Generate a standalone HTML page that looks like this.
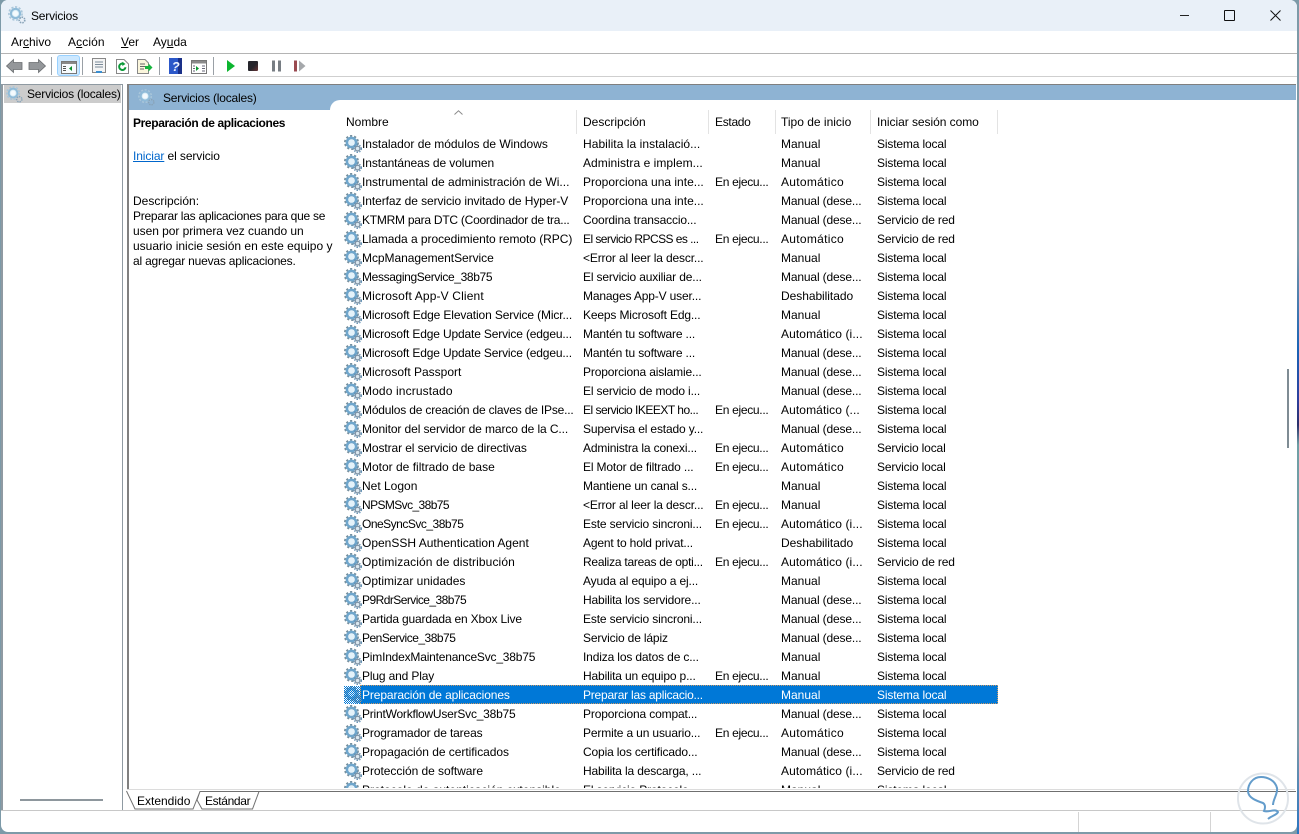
<!DOCTYPE html>
<html><head><meta charset="utf-8"><style>
html,body{margin:0;padding:0;width:1299px;height:834px;overflow:hidden;background:#7d9aa8}
body{position:relative;font:12px/15px "Liberation Sans",sans-serif;color:#000}
.a{position:absolute;white-space:nowrap}
#win{position:absolute;left:1px;top:0;width:1296px;height:832px;background:#fff;border-radius:7px;overflow:hidden}
svg{position:absolute;overflow:visible}
.r{position:absolute;left:0;width:1000px;height:19px}
.r span{position:absolute;top:2px;white-space:nowrap}
.r svg{left:344px;top:0}
.n{left:362px}.d{left:583px;letter-spacing:-.15px}.s{left:715px;letter-spacing:-.3px}.t{left:781px}.l{left:877px;letter-spacing:-.15px}
.au{letter-spacing:.3px}.ai{letter-spacing:.1px}.de{letter-spacing:-.15px}
.sel2{position:absolute;left:360px;top:-1px;width:638px;height:19px;background:#0078d7;outline:1px dotted #c96;outline-offset:-1px}
.h{position:absolute;top:115px;white-space:nowrap}
.v{position:absolute;top:110px;height:24px;width:1px;background:#e3e3e3}
.sep{position:absolute;top:57px;width:1px;height:18px;background:#9aa0a6}
u{text-decoration:underline}
</style></head><body>
<svg width="0" height="0" style="position:absolute"><defs>
<symbol id="g" viewBox="0 0 18 18">
<circle cx="7.5" cy="7.5" r="6.6" fill="none" stroke="#76909f" stroke-width="1.8" stroke-dasharray="2.2 2"/>
<circle cx="7.5" cy="7.5" r="4.6" fill="none" stroke="#6fa6cc" stroke-width="2.6"/>
<circle cx="7.5" cy="7.5" r="3" fill="#e4f2fa"/>
<circle cx="13.6" cy="13.6" r="2.4" fill="#dbe8f0" stroke="#7f93a5" stroke-width="1.4"/>
<circle cx="13.6" cy="13.6" r="3.8" fill="none" stroke="#5f8fb3" stroke-width="1.2" stroke-dasharray="1.4 1.4"/>
</symbol>
<symbol id="lg" viewBox="0 0 18 18">
<circle cx="7.5" cy="7.5" r="6.6" fill="none" stroke="#a9c6da" stroke-width="1.6" stroke-dasharray="2.2 1.6"/>
<circle cx="7.5" cy="7.5" r="4.6" fill="#d8ecf6" stroke="#8fbbd8" stroke-width="2"/>
<circle cx="7.5" cy="7.5" r="2.6" fill="#f4fafd"/>
<circle cx="14" cy="14" r="2.8" fill="none" stroke="#88a3b8" stroke-width="1.6" stroke-dasharray="1.5 1"/>
</symbol>
<pattern id="dith" width="2" height="2" patternUnits="userSpaceOnUse"><rect width="1" height="1" fill="#0078d7"/><rect x="1" y="1" width="1" height="1" fill="#0078d7"/></pattern>
</defs></svg>
<div id="win">
<div class="a" style="left:0;top:0;width:1296px;height:31px;background:#e9f0f8"></div>
</div>
<div class="a" style="left:1297px;top:0;width:2px;height:834px;background:linear-gradient(#7d9aa8 0,#7d9aa8 250px,#1a63b5 350px,#2d3f9c 400px,#2a2f6a 425px,#6f9fa5 445px,#7d9aa8 740px,#2a75c0 834px)"></div>
<svg style="left:8px;top:6px" width="18" height="18"><use href="#lg" width="18" height="18"/></svg>
<div class="a" style="left:31px;top:9px;letter-spacing:-.2px">Servicios</div>
<!-- window controls -->
<div class="a" style="left:1180px;top:15px;width:9px;height:1px;background:#222"></div>
<div class="a" style="left:1224px;top:10px;width:9px;height:9px;border:1px solid #111;border-radius:1px"></div>
<svg style="left:1270px;top:10px" width="11" height="11"><path d="M.5.5L10.5 10.5M10.5.5L.5 10.5" stroke="#111" stroke-width="1" fill="none"/></svg>
<!-- menu -->
<div class="a" style="left:11px;top:35px">Ar<u>c</u>hivo</div>
<div class="a" style="left:68px;top:35px;letter-spacing:.1px">A<u>c</u>ción</div>
<div class="a" style="left:121px;top:35px"><u>V</u>er</div>
<div class="a" style="left:153px;top:35px">Ay<u>u</u>da</div>
<div class="a" style="left:1px;top:53px;width:1296px;height:1px;background:#b4b4b4"></div>
<!-- toolbar -->
<svg style="left:6px;top:59px" width="40" height="14"><path d="M.5 7L7.5.5V3.5H16V10.5H7.5V13.5Z" fill="#94979a" stroke="#6a6d70" stroke-width=".8"/><path d="M39.5 7L32.5.5V3.5H23V10.5H32.5V13.5Z" fill="#94979a" stroke="#6a6d70" stroke-width=".8"/></svg>
<div class="sep" style="left:51px"></div>
<div class="a" style="left:57px;top:55px;width:23px;height:21px;background:#cce8ff;border:1px solid #99d1ff;box-sizing:border-box;border-radius:3px"></div>
<svg style="left:61px;top:61px" width="16" height="13"><rect x=".5" y=".5" width="15" height="12" fill="#f7fbfe" stroke="#777"/><rect x="1" y="1" width="14" height="2" fill="#888"/><path d="M2 5.5H5M2 7.5H5M2 9.5H5" stroke="#555"/><path d="M11 5V10L8 7.5Z" fill="#0a8f2e"/></svg>
<div class="sep" style="left:82px"></div>
<svg style="left:92px;top:58px" width="14" height="15"><rect x=".5" y=".5" width="13" height="14" fill="#f4f4f4" stroke="#888"/><path d="M3 4H11M3 6.5H11M3 9H11" stroke="#7a8a99"/><rect x="4" y="13" width="6" height="2" fill="#3a8ed0"/></svg>
<svg style="left:116px;top:59px" width="13" height="15"><path d="M.5.5H8L12.5 5V14.5H.5Z" fill="#fff" stroke="#888"/><path d="M9.5 8.2A3.2 3.2 0 1 1 7.5 4.8" fill="none" stroke="#0b9a38" stroke-width="2"/><path d="M6.3 2.8L9.5 5L6.3 7Z" fill="#0b9a38"/></svg>
<svg style="left:137px;top:59px" width="16" height="15"><path d="M.5.5H8L11.5 4V14.5H.5Z" fill="#fbf6dc" stroke="#888"/><path d="M3 5H8M3 7.5H8M3 10H7" stroke="#666"/><path d="M8 7H11.5V4.5L15.5 8.5L11.5 12.5V10H8Z" fill="#16b53d"/></svg>
<div class="sep" style="left:159px"></div>
<svg style="left:169px;top:58px" width="13" height="16"><rect width="13" height="16" fill="#2c58c9"/><rect x="9" width="4" height="16" fill="#1a3088"/><text x="2.8" y="13" font-family="Liberation Sans" font-weight="bold" font-style="italic" font-size="13" fill="#eef3ff">?</text></svg>
<svg style="left:191px;top:60px" width="16" height="14"><rect x=".5" y=".5" width="15" height="13" fill="#fff" stroke="#777"/><rect x="1" y="1" width="14" height="2.5" fill="#8a8a8a"/><path d="M5 6V11L8 8.5Z" fill="#0a9a30"/><path d="M2 6H4M2 8.5H4M2 11H4M11 6H14M11 8.5H14M11 11H14" stroke="#667"/></svg>
<div class="sep" style="left:213px"></div>
<svg style="left:227px;top:60px" width="9" height="12"><path d="M0 0L8 6L0 12Z" fill="#0cb52f"/></svg>
<div class="a" style="left:248px;top:61px;width:10px;height:10px;background:linear-gradient(135deg,#26262c 55%,#6b3436);border-radius:1px"></div>
<svg style="left:272px;top:60px" width="9" height="12"><rect width="3" height="11" y=".5" fill="#777d83"/><rect x="6" y=".5" width="3" height="11" fill="#777d83"/></svg>
<svg style="left:294px;top:60px" width="12" height="12"><rect y=".5" width="3" height="11" fill="#9a4a50"/><path d="M5 .5L11.5 6L5 11.5Z" fill="#a5a8ab"/></svg>
<div class="a" style="left:1px;top:76px;width:1296px;height:1px;background:#cfcfcf"></div>
<!-- left tree -->
<div class="a" style="left:1px;top:84px;width:122px;height:726px;box-sizing:border-box;border:1px solid #8f9aa2;border-left:2px solid #8f9aa2;border-bottom:none"></div>
<div class="a" style="left:4px;top:85px;width:117px;height:18px;background:#cccccc"></div>
<svg style="left:6px;top:86px" width="17" height="17"><use href="#lg" width="17" height="17"/></svg>
<div class="a" style="left:27px;top:87px;letter-spacing:-.2px">Servicios (locales)</div>
<div class="a" style="left:20px;top:799px;width:83px;height:2px;background:#8e979d"></div>
<!-- right panel -->
<div class="a" style="left:127px;top:84px;width:2px;height:706px;background:#808080"></div>
<div class="a" style="left:127px;top:84px;width:1169px;height:1px;background:#7f7f7f"></div>
<div class="a" style="left:129px;top:85px;width:1167px;height:15px;background:#8eb3d3"></div>
<div class="a" style="left:129px;top:100px;width:211px;height:10px;background:#8eb3d3"></div>
<div class="a" style="left:330px;top:100px;width:12px;height:12px;background:#fff;border-radius:10px 0 0 0"></div>
<svg style="left:138px;top:89px" width="17" height="17"><use href="#lg" width="17" height="17"/></svg>
<div class="a" style="left:163px;top:91px;letter-spacing:-.2px">Servicios (locales)</div>
<div class="a" style="left:133px;top:116px;font-weight:bold;letter-spacing:-.37px">Preparación de aplicaciones</div>
<div class="a" style="left:133px;top:149px;letter-spacing:-.1px"><u style="color:#0066cc">Iniciar</u> el servicio</div>
<div class="a" style="left:133px;top:194px">Descripción:</div>
<div class="a" style="left:133px;top:209px"><span style="letter-spacing:-.25px">Preparar las aplicaciones para que se</span><br><span style="letter-spacing:-.05px">usen por primera vez cuando un</span><br>usuario inicie sesión en este equipo y<br><span style="letter-spacing:-.2px">al agregar nuevas aplicaciones.</span></div>
<!-- header -->
<svg style="left:454px;top:110px" width="9" height="6"><path d="M.5 4.5L4.5 .8L8.5 4.5" fill="none" stroke="#8a8a8a"/></svg>
<div class="h" style="left:346px">Nombre</div>
<div class="h" style="left:583px">Descripción</div>
<div class="h" style="left:715px;letter-spacing:-.3px">Estado</div>
<div class="h" style="left:781px">Tipo de inicio</div>
<div class="h" style="left:877px;letter-spacing:-.05px">Iniciar sesión como</div>
<div class="v" style="left:576px"></div><div class="v" style="left:708px"></div><div class="v" style="left:775px"></div><div class="v" style="left:870px"></div><div class="v" style="left:997px"></div>
<!-- list -->
<div class="a" id="list" style="left:0;top:135px;width:1000px;height:653px;overflow:hidden">
<div class="r" style="top:0"><svg width="18" height="18"><use href="#g" width="18" height="18"/></svg><span class="n" style="letter-spacing:-.03px">Instalador de módulos de Windows</span><span class="d" style="letter-spacing:.05px">Habilita la instalació...</span><span class="t">Manual</span><span class="l">Sistema local</span></div>
<div class="r" style="top:19px"><svg width="18" height="18"><use href="#g" width="18" height="18"/></svg><span class="n" style="letter-spacing:-.09px">Instantáneas de volumen</span><span class="d" style="letter-spacing:.05px">Administra e implem...</span><span class="t">Manual</span><span class="l">Sistema local</span></div>
<div class="r" style="top:38px"><svg width="18" height="18"><use href="#g" width="18" height="18"/></svg><span class="n">Instrumental de administración de Wi...</span><span class="d" style="letter-spacing:0">Proporciona una inte...</span><span class="s">En ejecu...</span><span class="t au">Automático</span><span class="l">Sistema local</span></div>
<div class="r" style="top:57px"><svg width="18" height="18"><use href="#g" width="18" height="18"/></svg><span class="n" style="letter-spacing:-.08px">Interfaz de servicio invitado de Hyper-V</span><span class="d" style="letter-spacing:0">Proporciona una inte...</span><span class="t de">Manual (dese...</span><span class="l">Sistema local</span></div>
<div class="r" style="top:76px"><svg width="18" height="18"><use href="#g" width="18" height="18"/></svg><span class="n" style="letter-spacing:-.25px">KTMRM para DTC (Coordinador de tra...</span><span class="d">Coordina transaccio...</span><span class="t de">Manual (dese...</span><span class="l">Servicio de red</span></div>
<div class="r" style="top:95px"><svg width="18" height="18"><use href="#g" width="18" height="18"/></svg><span class="n" style="letter-spacing:-.05px">Llamada a procedimiento remoto (RPC)</span><span class="d" style="letter-spacing:-.55px">El servicio RPCSS es ...</span><span class="s">En ejecu...</span><span class="t au">Automático</span><span class="l">Servicio de red</span></div>
<div class="r" style="top:114px"><svg width="18" height="18"><use href="#g" width="18" height="18"/></svg><span class="n" style="letter-spacing:-.05px">McpManagementService</span><span class="d">&lt;Error al leer la descr...</span><span class="t">Manual</span><span class="l">Sistema local</span></div>
<div class="r" style="top:133px"><svg width="18" height="18"><use href="#g" width="18" height="18"/></svg><span class="n" style="letter-spacing:-.36px">MessagingService_38b75</span><span class="d">El servicio auxiliar de...</span><span class="t de">Manual (dese...</span><span class="l">Sistema local</span></div>
<div class="r" style="top:152px"><svg width="18" height="18"><use href="#g" width="18" height="18"/></svg><span class="n" style="letter-spacing:.14px">Microsoft App-V Client</span><span class="d">Manages App-V user...</span><span class="t" style="letter-spacing:-.05px">Deshabilitado</span><span class="l">Sistema local</span></div>
<div class="r" style="top:171px"><svg width="18" height="18"><use href="#g" width="18" height="18"/></svg><span class="n" style="letter-spacing:-.13px">Microsoft Edge Elevation Service (Micr...</span><span class="d">Keeps Microsoft Edg...</span><span class="t">Manual</span><span class="l">Sistema local</span></div>
<div class="r" style="top:190px"><svg width="18" height="18"><use href="#g" width="18" height="18"/></svg><span class="n" style="letter-spacing:-.16px">Microsoft Edge Update Service (edgeu...</span><span class="d">Mantén tu software ...</span><span class="t ai">Automático (i...</span><span class="l">Sistema local</span></div>
<div class="r" style="top:209px"><svg width="18" height="18"><use href="#g" width="18" height="18"/></svg><span class="n" style="letter-spacing:-.16px">Microsoft Edge Update Service (edgeu...</span><span class="d">Mantén tu software ...</span><span class="t de">Manual (dese...</span><span class="l">Sistema local</span></div>
<div class="r" style="top:228px"><svg width="18" height="18"><use href="#g" width="18" height="18"/></svg><span class="n">Microsoft Passport</span><span class="d">Proporciona aislamie...</span><span class="t de">Manual (dese...</span><span class="l">Sistema local</span></div>
<div class="r" style="top:247px"><svg width="18" height="18"><use href="#g" width="18" height="18"/></svg><span class="n" style="letter-spacing:.13px">Modo incrustado</span><span class="d">El servicio de modo i...</span><span class="t de">Manual (dese...</span><span class="l">Sistema local</span></div>
<div class="r" style="top:266px"><svg width="18" height="18"><use href="#g" width="18" height="18"/></svg><span class="n" style="letter-spacing:-.18px">Módulos de creación de claves de IPse...</span><span class="d" style="letter-spacing:-.5px">El servicio IKEEXT ho...</span><span class="s">En ejecu...</span><span class="t ai">Automático (...</span><span class="l">Sistema local</span></div>
<div class="r" style="top:285px"><svg width="18" height="18"><use href="#g" width="18" height="18"/></svg><span class="n" style="letter-spacing:-.1px">Monitor del servidor de marco de la C...</span><span class="d">Supervisa el estado y...</span><span class="t de">Manual (dese...</span><span class="l">Sistema local</span></div>
<div class="r" style="top:304px"><svg width="18" height="18"><use href="#g" width="18" height="18"/></svg><span class="n" style="letter-spacing:-.1px">Mostrar el servicio de directivas</span><span class="d">Administra la conexi...</span><span class="s">En ejecu...</span><span class="t au">Automático</span><span class="l">Servicio local</span></div>
<div class="r" style="top:323px"><svg width="18" height="18"><use href="#g" width="18" height="18"/></svg><span class="n">Motor de filtrado de base</span><span class="d">El Motor de filtrado ...</span><span class="s">En ejecu...</span><span class="t au">Automático</span><span class="l">Servicio local</span></div>
<div class="r" style="top:342px"><svg width="18" height="18"><use href="#g" width="18" height="18"/></svg><span class="n">Net Logon</span><span class="d">Mantiene un canal s...</span><span class="t">Manual</span><span class="l">Sistema local</span></div>
<div class="r" style="top:361px"><svg width="18" height="18"><use href="#g" width="18" height="18"/></svg><span class="n" style="letter-spacing:-.6px">NPSMSvc_38b75</span><span class="d">&lt;Error al leer la descr...</span><span class="s">En ejecu...</span><span class="t">Manual</span><span class="l">Sistema local</span></div>
<div class="r" style="top:380px"><svg width="18" height="18"><use href="#g" width="18" height="18"/></svg><span class="n" style="letter-spacing:-.5px">OneSyncSvc_38b75</span><span class="d">Este servicio sincroni...</span><span class="s">En ejecu...</span><span class="t ai">Automático (i...</span><span class="l">Sistema local</span></div>
<div class="r" style="top:399px"><svg width="18" height="18"><use href="#g" width="18" height="18"/></svg><span class="n">OpenSSH Authentication Agent</span><span class="d">Agent to hold privat...</span><span class="t" style="letter-spacing:-.05px">Deshabilitado</span><span class="l">Sistema local</span></div>
<div class="r" style="top:418px"><svg width="18" height="18"><use href="#g" width="18" height="18"/></svg><span class="n" style="letter-spacing:.1px">Optimización de distribución</span><span class="d" style="letter-spacing:-.25px">Realiza tareas de opti...</span><span class="s">En ejecu...</span><span class="t ai">Automático (i...</span><span class="l">Servicio de red</span></div>
<div class="r" style="top:437px"><svg width="18" height="18"><use href="#g" width="18" height="18"/></svg><span class="n">Optimizar unidades</span><span class="d">Ayuda al equipo a ej...</span><span class="t">Manual</span><span class="l">Sistema local</span></div>
<div class="r" style="top:456px"><svg width="18" height="18"><use href="#g" width="18" height="18"/></svg><span class="n" style="letter-spacing:-.55px">P9RdrService_38b75</span><span class="d">Habilita los servidore...</span><span class="t de">Manual (dese...</span><span class="l">Sistema local</span></div>
<div class="r" style="top:475px"><svg width="18" height="18"><use href="#g" width="18" height="18"/></svg><span class="n" style="letter-spacing:-.17px">Partida guardada en Xbox Live</span><span class="d">Este servicio sincroni...</span><span class="t de">Manual (dese...</span><span class="l">Sistema local</span></div>
<div class="r" style="top:494px"><svg width="18" height="18"><use href="#g" width="18" height="18"/></svg><span class="n" style="letter-spacing:-.5px">PenService_38b75</span><span class="d">Servicio de lápiz</span><span class="t de">Manual (dese...</span><span class="l">Sistema local</span></div>
<div class="r" style="top:513px"><svg width="18" height="18"><use href="#g" width="18" height="18"/></svg><span class="n" style="letter-spacing:-.2px">PimIndexMaintenanceSvc_38b75</span><span class="d">Indiza los datos de c...</span><span class="t">Manual</span><span class="l">Sistema local</span></div>
<div class="r" style="top:532px"><svg width="18" height="18"><use href="#g" width="18" height="18"/></svg><span class="n" style="letter-spacing:-.15px">Plug and Play</span><span class="d">Habilita un equipo p...</span><span class="s">En ejecu...</span><span class="t">Manual</span><span class="l">Sistema local</span></div>
<div class="r" style="top:551px;color:#fff"><div class="sel2"></div><svg width="18" height="18"><use href="#g" width="18" height="18"/><rect width="18" height="18" fill="url(#dith)"/></svg><span class="n" style="letter-spacing:-.11px">Preparación de aplicaciones</span><span class="d" style="letter-spacing:-.22px">Preparar las aplicacio...</span><span class="t">Manual</span><span class="l">Sistema local</span></div>
<div class="r" style="top:570px"><svg width="18" height="18"><use href="#g" width="18" height="18"/></svg><span class="n" style="letter-spacing:-.22px">PrintWorkflowUserSvc_38b75</span><span class="d">Proporciona compat...</span><span class="t de">Manual (dese...</span><span class="l">Sistema local</span></div>
<div class="r" style="top:589px"><svg width="18" height="18"><use href="#g" width="18" height="18"/></svg><span class="n" style="letter-spacing:-.14px">Programador de tareas</span><span class="d">Permite a un usuario...</span><span class="s">En ejecu...</span><span class="t au">Automático</span><span class="l">Sistema local</span></div>
<div class="r" style="top:608px"><svg width="18" height="18"><use href="#g" width="18" height="18"/></svg><span class="n" style="letter-spacing:-.04px">Propagación de certificados</span><span class="d">Copia los certificado...</span><span class="t de">Manual (dese...</span><span class="l">Sistema local</span></div>
<div class="r" style="top:627px"><svg width="18" height="18"><use href="#g" width="18" height="18"/></svg><span class="n" style="letter-spacing:-.05px">Protección de software</span><span class="d">Habilita la descarga, ...</span><span class="t ai">Automático (i...</span><span class="l">Servicio de red</span></div>
<div class="r" style="top:646px"><svg width="18" height="18"><use href="#g" width="18" height="18"/></svg><span class="n">Protocolo de autenticación extensible</span><span class="d">El servicio Protocolo...</span><span class="t">Manual</span><span class="l">Sistema local</span></div>
</div>
<!-- scrollbar -->
<div class="a" style="left:1287px;top:369px;width:2px;height:79px;background:#7f8c94"></div>
<!-- tabs -->
<div class="a" style="left:127px;top:789px;width:1168px;height:1px;background:#dcdcdc"></div>
<div class="a" style="left:259px;top:791px;width:1037px;height:1px;background:#6f6f6f"></div>
<svg style="left:126px;top:790px" width="135" height="20"><path d="M.5 1L9 19H67L74 1.5H133L126.5 19H76L71 10L74 1.5" fill="none" stroke="#707070"/></svg>
<div class="a" style="left:137px;top:794px">Extendido</div>
<div class="a" style="left:205px;top:794px;letter-spacing:-.35px">Estándar</div>
<div class="a" style="left:1px;top:810px;width:1296px;height:1px;background:#c8c8c8"></div>
<div class="a" style="left:1078px;top:812px;width:1px;height:20px;background:#d4d4d4"></div>
<div class="a" style="left:1210px;top:812px;width:1px;height:20px;background:#d4d4d4"></div>
<!-- watermark -->
<svg style="left:1237px;top:772px" width="52" height="53"><circle cx="26" cy="26.5" r="25" fill="none" stroke="#dfe4e9" stroke-width="2"/><path d="M36 33C36 27 41 22 40 16C38 8 30 5 24 5C16 5 11 12 11 19C11 26 20 29 26 31C29 33 28 37 27 39C31 41 38 36 41 40C40 43 34 44 31 47" fill="none" stroke="#639ccb" stroke-width="2"/></svg>
</body></html>
